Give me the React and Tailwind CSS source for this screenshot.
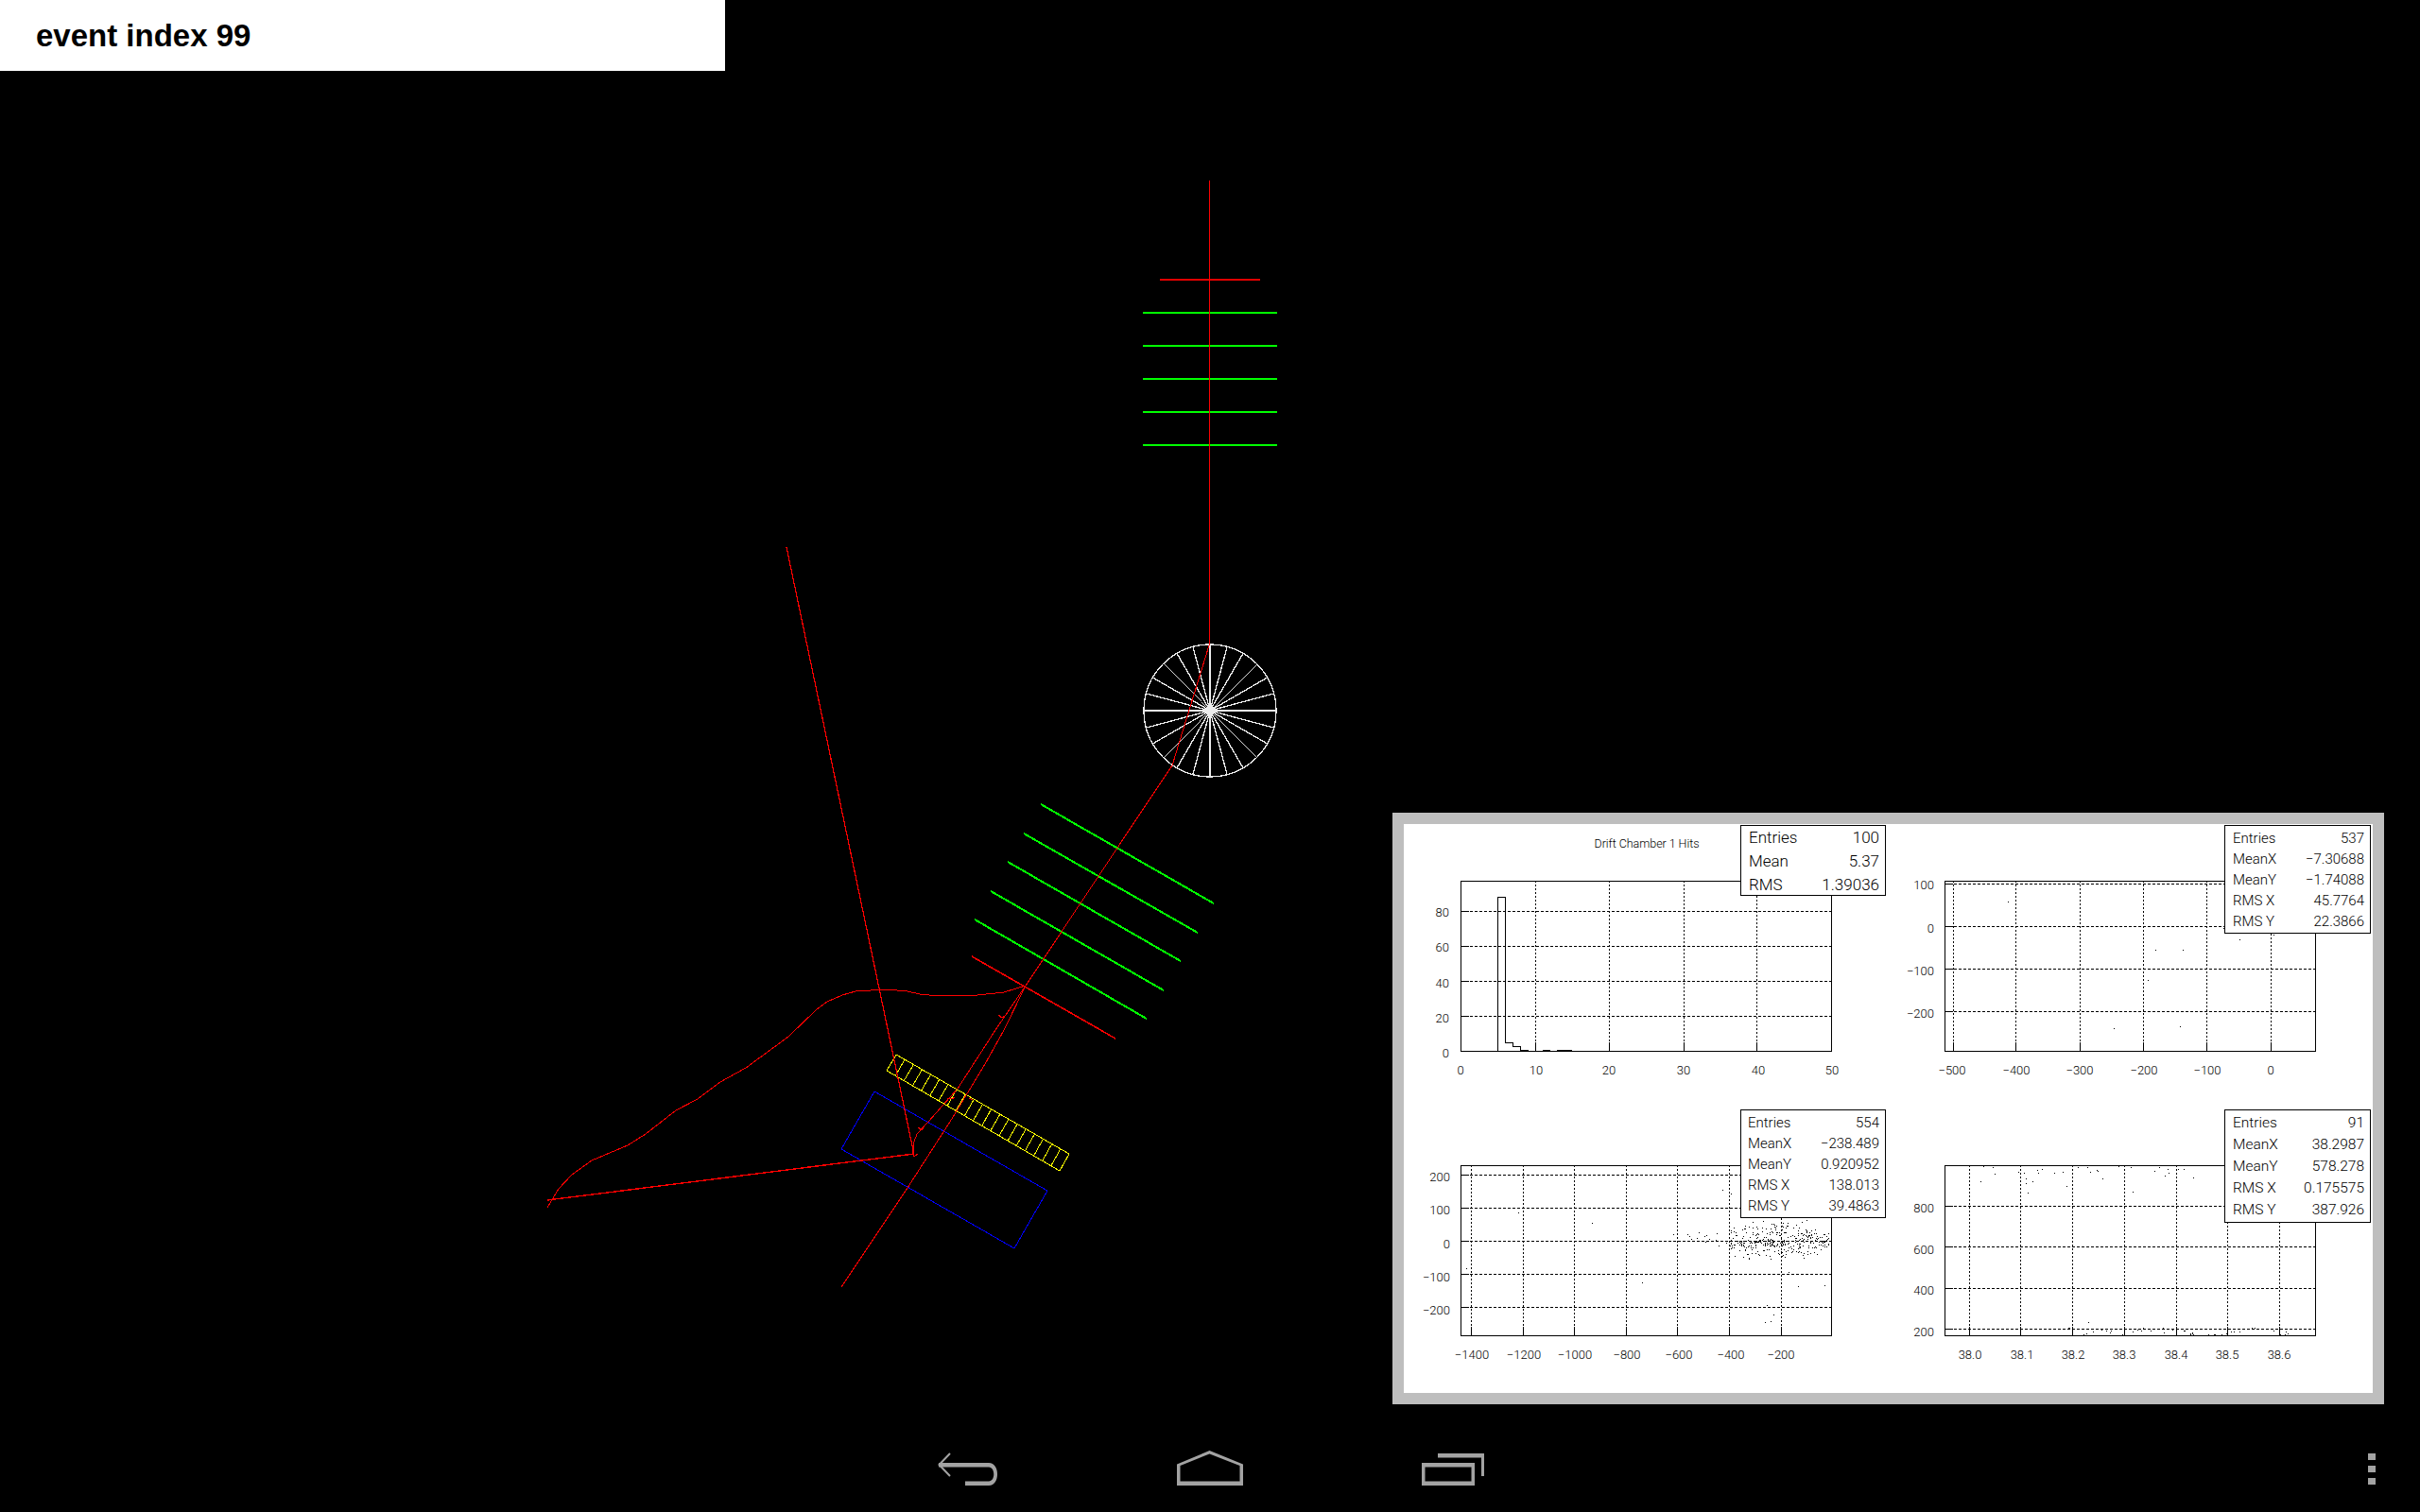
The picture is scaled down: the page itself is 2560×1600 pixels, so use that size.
import React from "react";

const pts = (a) => a.map((p) => p.join(",")).join(" ");

function rng(seed) {
  let s = seed;
  return () => {
    s |= 0;
    s = (s + 0x6d2b79f5) | 0;
    let t = Math.imul(s ^ (s >>> 15), 1 | s);
    t = (t + Math.imul(t ^ (t >>> 7), 61 | t)) ^ t;
    return ((t ^ (t >>> 14)) >>> 0) / 4294967296;
  };
}
const dot = ([x, y]) => `M${Math.round(x)} ${Math.round(y)}h1v1h-1z`;
const gauss = (r) => (r() + r() + r() + r() - 2) * 1.22;

const dots2 = [[2124, 954], [2280, 1005], [2309, 1005], [2369, 994], [2405, 989], [2272, 1037], [2236, 1088], [2306, 1086], [2352, 982]];

function cloud() {
  const r = rng(99);
  const out = [[1822, 1259], [1831, 1263], [1606, 1283], [1684, 1294], [1551, 1342], [1737, 1357], [1892, 1346], [1902, 1361], [1930, 1360], [1869, 1381], [1876, 1391], [1867, 1399], [1873, 1398], [1770, 1306], [1785, 1306]];
  for (let i = 0; i < 300; i++) {
    const x = 1830 + r() * 105;
    const y = 1313 + gauss(r) * (18 - Math.abs(x - 1872) * 0.16);
    if (y > 1290 && y < 1332) out.push([x, y]);
  }
  for (let i = 0; i < 60; i++) out.push([1870 + gauss(r) * 20, 1315 + gauss(r) * 3]);
  for (let i = 0; i < 14; i++) out.push([1780 + r() * 50, 1304 + r() * 16]);
  return out;
}

function plot4Dots() {
  const r = rng(7);
  const top = [[275, 222], [303, 225], [308, 245], [265, 270], [378, 240], [395, 242], [433, 235], [448, 232], [437, 243], [400, 262], [400, 275], [420, 270], [407, 306], [485, 243], [510, 240], [522, 285], [553, 225], [583, 225], [610, 235], [628, 260], [613, 238], [590, 240], [675, 222], [712, 224], [718, 303], [780, 237], [795, 225], [820, 232], [812, 253], [822, 243], [850, 232], [868, 232], [897, 258], [585, 718]];
  const out = top.map(([x, y]) => [2000 + x / 2.8, 1160 + y / 3]);
  for (let i = 0; i < 48; i++) out.push([2186 + r() * 240, 1405 + r() * 8]);
  return out;
}

const boxBase = "absolute top-[1px] right-[2px] bg-white border border-black flex flex-col justify-center text-black font-light";

const plots = [
  {
    cell: [1485, 872, 512, 301],
    frame: [1545, 932, 1937, 1112],
    vx: [1624, 1702, 1781, 1858],
    hy: [964, 1001, 1038, 1075],
    labelY: 1132,
    yRight: 1533,
    xl: [["0", 1545], ["10", 1625], ["20", 1702], ["30", 1781], ["40", 1860], ["50", 1938]],
    yl: [["80", 965], ["60", 1002], ["40", 1040], ["20", 1077], ["0", 1114]],
    title: "Drift Chamber 1  Hits",
    hist: true,
    box: "w-[154px] h-[75px] pl-[8px] pr-[6px] pt-[2px] text-[17px] leading-[25px]",
    stats: [["Entries", "100"], ["Mean", "5.37"], ["RMS", "1.39036"]],
  },
  {
    cell: [1997, 872, 513, 301],
    frame: [2057, 932, 2449, 1112],
    vx: [2066, 2132, 2200, 2267, 2334, 2402],
    hy: [935, 980, 1025, 1070],
    labelY: 1132,
    yRight: 2046,
    xl: [["−500", 2065], ["−400", 2133], ["−300", 2200], ["−200", 2268], ["−100", 2335], ["0", 2402]],
    yl: [["100", 936], ["0", 982], ["−100", 1027], ["−200", 1072]],
    dots: dots2,
    box: "w-[155px] h-[115px] pl-[8px] pr-[6px] pt-[1px] text-[15px] leading-[22px]",
    stats: [["Entries", "537"], ["MeanX", "−7.30688"], ["MeanY", "−1.74088"], ["RMS X", "45.7764"], ["RMS Y", "22.3866"]],
  },
  {
    cell: [1485, 1173, 512, 301],
    frame: [1545, 1233, 1937, 1413],
    vx: [1556, 1611, 1665, 1720, 1774, 1829, 1884],
    hy: [1243, 1278, 1313, 1348, 1383],
    labelY: 1433,
    yRight: 1534,
    xl: [["−1400", 1557], ["−1200", 1612], ["−1000", 1666], ["−800", 1721], ["−600", 1776], ["−400", 1831], ["−200", 1884]],
    yl: [["200", 1245], ["100", 1280], ["0", 1316], ["−100", 1351], ["−200", 1386]],
    dots: cloud(),
    box: "w-[154px] h-[115px] pl-[7px] pr-[6px] pt-[1px] text-[15px] leading-[22px]",
    stats: [["Entries", "554"], ["MeanX", "−238.489"], ["MeanY", "0.920952"], ["RMS X", "138.013"], ["RMS Y", "39.4863"]],
  },
  {
    cell: [1997, 1173, 513, 301],
    frame: [2057, 1233, 2449, 1413],
    vx: [2083, 2137, 2192, 2247, 2302, 2356, 2411],
    hy: [1276, 1319, 1363, 1406],
    labelY: 1433,
    yRight: 2046,
    xl: [["38.0", 2084], ["38.1", 2139], ["38.2", 2193], ["38.3", 2247], ["38.4", 2302], ["38.5", 2356], ["38.6", 2411]],
    yl: [["800", 1278], ["600", 1322], ["400", 1365], ["200", 1409]],
    dots: plot4Dots(),
    box: "w-[155px] h-[120px] pl-[8px] pr-[6px] pt-[1px] text-[15.5px] leading-[23px]",
    stats: [["Entries", "91"], ["MeanX", "38.2987"], ["MeanY", "578.278"], ["RMS X", "0.175575"], ["RMS Y", "387.926"]],
  },
];

function Plot({ p }) {
  const [cx, cy, cw, ch] = p.cell;
  const [x0, y0, x1, y1] = p.frame;
  return (
    <div className="relative">
      <svg className="block" width={cw} height={ch} viewBox={`${cx} ${cy} ${cw} ${ch}`}>
        <g shapeRendering="crispEdges" stroke="#000" strokeWidth="1" fill="none">
          {p.vx.map((x) => (
            <line key={x} x1={x + 0.5} x2={x + 0.5} y1={y0} y2={y1} strokeDasharray="2 2" />
          ))}
          {p.hy.map((y) => (
            <line key={y} x1={x0} x2={x1} y1={y + 0.5} y2={y + 0.5} strokeDasharray="3 2" />
          ))}
          {p.vx.map((x) => (
            <line key={x} x1={x + 0.5} x2={x + 0.5} y1={y1 - 9} y2={y1} />
          ))}
          {p.hy.map((y) => (
            <line key={y} x1={x0} x2={x0 + 9} y1={y + 0.5} y2={y + 0.5} />
          ))}
          <rect x={x0 + 0.5} y={y0 + 0.5} width={x1 - x0} height={y1 - y0} />
          {p.hist && (
            <path d="M1584.5 1112V949.5H1592.5V1103.5H1600.5V1107.5H1608.5V1111.5H1616.5M1631.5 1111.5H1640M1647 1111.5H1663" />
          )}
        </g>
        {p.dots && <path d={p.dots.map(dot).join("")} fill="#000" shapeRendering="crispEdges" />}
        <g fontFamily="Roboto, sans-serif" fontWeight="300" fontSize="13" fill="#000">
          {p.title && (
            <text x="1742" y="897" fontSize="12.5" textAnchor="middle" textLength="111">
              {p.title}
            </text>
          )}
          {p.xl.map(([t, x]) => (
            <text key={t} x={x} y={p.labelY + 5} textAnchor="middle">
              {t}
            </text>
          ))}
          {p.yl.map(([t, y]) => (
            <text key={t} x={p.yRight} y={y + 5} textAnchor="end">
              {t}
            </text>
          ))}
        </g>
      </svg>
      <div className={`${boxBase} ${p.box}`} style={{ fontFamily: "Roboto, sans-serif" }}>
        {p.stats.map(([k, v]) => (
          <div key={k} className="flex justify-between">
            <span>{k}</span>
            <span>{v}</span>
          </div>
        ))}
      </div>
    </div>
  );
}

const lerp = (a, b, t) => [a[0] + (b[0] - a[0]) * t, a[1] + (b[1] - a[1]) * t];

const GREEN_Y = [331, 366, 401, 436, 471];
const GREEN_D = [
  [1101, 851, 1284, 956],
  [1083, 882, 1267, 987],
  [1066, 912, 1249, 1017],
  [1048, 943, 1231, 1048],
  [1031, 973, 1213, 1078],
];
const Y = { a: [948, 1116], b: [1131, 1221], c: [1121, 1239], d: [938, 1133] };

const SPIRAL = [[1085, 1043], [1062, 1050], [1034, 1053], [983, 1053], [973, 1052], [960, 1049], [938, 1047], [905, 1049], [891, 1053], [875, 1060], [864, 1068], [834, 1097], [789, 1130], [762, 1145], [738, 1163], [715, 1175], [683, 1200], [664, 1212], [626, 1228], [605, 1243], [591, 1258], [579, 1278]];
const LEFT_TRACK = [[1085, 1043], [1053, 1090], [1013, 1152], [982, 1187], [970, 1200], [967, 1208], [966, 1221]];
const RIGHT_TRACK = [[1085, 1043], [1062, 1090], [1042, 1126], [1005, 1187], [960, 1257], [890, 1362]];
const MAIN_TRACK = [[1279, 191], [1279, 683], [1240, 810], [1085, 1043]];

function Scene() {
  return (
    <svg className="absolute inset-0 block" width="2560" height="1445" viewBox="0 75 2560 1445" fill="none" shapeRendering="crispEdges">
      <g stroke="#00ff00" strokeWidth="2">
        {GREEN_Y.map((y) => (
          <line key={y} x1="1209" x2="1351" y1={y} y2={y} />
        ))}
        {GREEN_D.map((l) => (
          <line key={l[0]} x1={l[0]} y1={l[1]} x2={l[2]} y2={l[3]} />
        ))}
      </g>
      <line x1="1227" x2="1333" y1="296" y2="296" stroke="#e00000" strokeWidth="2" />
      <line x1="1028" y1="1012" x2="1180" y2="1099" stroke="#ff0000" strokeWidth="1.6" />

      <g stroke="#ececec">
        <circle cx="1280" cy="752" r="70" strokeWidth="1.3" />
        {Array.from({ length: 24 }, (_, i) => {
          const a = (i * Math.PI) / 12;
          const thin = i % 6 === 3;
          return (
            <line
              key={i}
              x1="1280"
              y1="752"
              x2={1280 + 70 * Math.sin(a)}
              y2={752 - 70 * Math.cos(a)}
              strokeWidth={i % 12 === 0 ? 2 : thin ? 0.9 : 1.3}
            />
          );
        })}
        <circle cx="1280" cy="752" r="5" fill="#ececec" stroke="none" />
      </g>

      <g stroke="#ffff00" strokeWidth="1">
        <polygon points={pts([Y.a, Y.b, Y.c, Y.d])} />
        {Array.from({ length: 19 }, (_, i) => {
          const t = (i + 1) / 20;
          const p = lerp(Y.a, Y.b, t);
          const q = lerp(Y.d, Y.c, t);
          return <line key={i} x1={p[0]} y1={p[1]} x2={q[0]} y2={q[1]} />;
        })}
      </g>

      <polygon points="925,1155 890,1216 1073,1321 1108,1260" stroke="#0000ff" strokeWidth="1" />

      <g stroke="#ff0000" strokeWidth="1">
        <polyline points={pts(MAIN_TRACK)} />
        <polyline points={pts(LEFT_TRACK)} />
        <polyline points={pts(RIGHT_TRACK)} />
        <polyline points={pts(SPIRAL)} />
        <line x1="832" y1="579" x2="967" y2="1222" strokeWidth="1.2" />
        <line x1="967" y1="1221" x2="579" y2="1270" strokeWidth="1.4" />
        <polyline points="1056,1074 1060,1077 1063,1075" />
        <polyline points="1002,1162 1007,1163 1010,1161" />
        <polyline points="1025,1162 1029,1164" />
        <polyline points="971,1193 975,1196 977,1194" />
        <polyline points="965,1218 967,1224 971,1221" />
      </g>
    </svg>
  );
}

const NAV = "#a3a3a3";

function NavBar() {
  return (
    <nav className="grid grid-cols-[1fr_768px_1fr] h-[80px]">
      <div />
      <div className="flex">
        <div className="w-[256px] flex justify-center pt-[14px]">
          <svg width="68" height="40" viewBox="990 1534 68 40">
            <polyline points="1005,1538 993.5,1550 1005,1562" fill="none" stroke={NAV} strokeWidth="2" />
            <path d="M1046 1548C1058 1548 1058 1572 1046 1572L1021 1572L1021 1567.5L1046 1567.5C1053 1567.5 1053 1552.5 1046 1552.5L993 1552.5L993 1548Z" fill={NAV} />
          </svg>
        </div>
        <div className="w-[256px] flex justify-center pt-[14px]">
          <svg width="72" height="40" viewBox="1244 1534 72 40">
            <path d="M1279.5 1535L1315 1549.5V1572H1245V1549.5ZM1279.5 1538.5L1248.5 1551V1567.5H1311.5V1551Z" fill={NAV} fillRule="evenodd" />
          </svg>
        </div>
        <div className="w-[256px] flex justify-center pt-[14px]">
          <svg width="68" height="40" viewBox="1502 1534 68 40">
            <path d="M1504 1548H1560V1572H1504ZM1507.5 1552.5V1567.5H1556.5V1552.5Z" fill={NAV} fillRule="evenodd" />
            <path d="M1521 1538H1570V1562H1567V1542.5H1521Z" fill={NAV} />
          </svg>
        </div>
      </div>
      <div className="flex justify-end pr-[47px] pt-[18px]">
        <div className="flex flex-col gap-[6px]">
          <div className="w-[8px] h-[7px] bg-[#a3a3a3]" />
          <div className="w-[8px] h-[7px] bg-[#a3a3a3]" />
          <div className="w-[8px] h-[7px] bg-[#a3a3a3]" />
        </div>
      </div>
    </nav>
  );
}

export default function App() {
  return (
    <div className="flex flex-col w-[2560px] h-[1600px] bg-black overflow-hidden">
      <header className="w-[767px] h-[75px] bg-white flex items-center pl-[38px] shrink-0">
        <span className="text-[33px] font-bold text-black" style={{ fontFamily: '"Liberation Sans", Arial, sans-serif' }}>
          event index 99
        </span>
      </header>
      <main className="relative flex-1">
        <Scene />
        <section className="absolute top-[785px] right-[38px] w-[1049px] h-[626px] border-[12px] border-[#bebebe] bg-white grid grid-cols-[512px_513px] grid-rows-[301px_301px]">
          {plots.map((p) => (
            <Plot key={p.cell.join()} p={p} />
          ))}
        </section>
      </main>
      <NavBar />
    </div>
  );
}
